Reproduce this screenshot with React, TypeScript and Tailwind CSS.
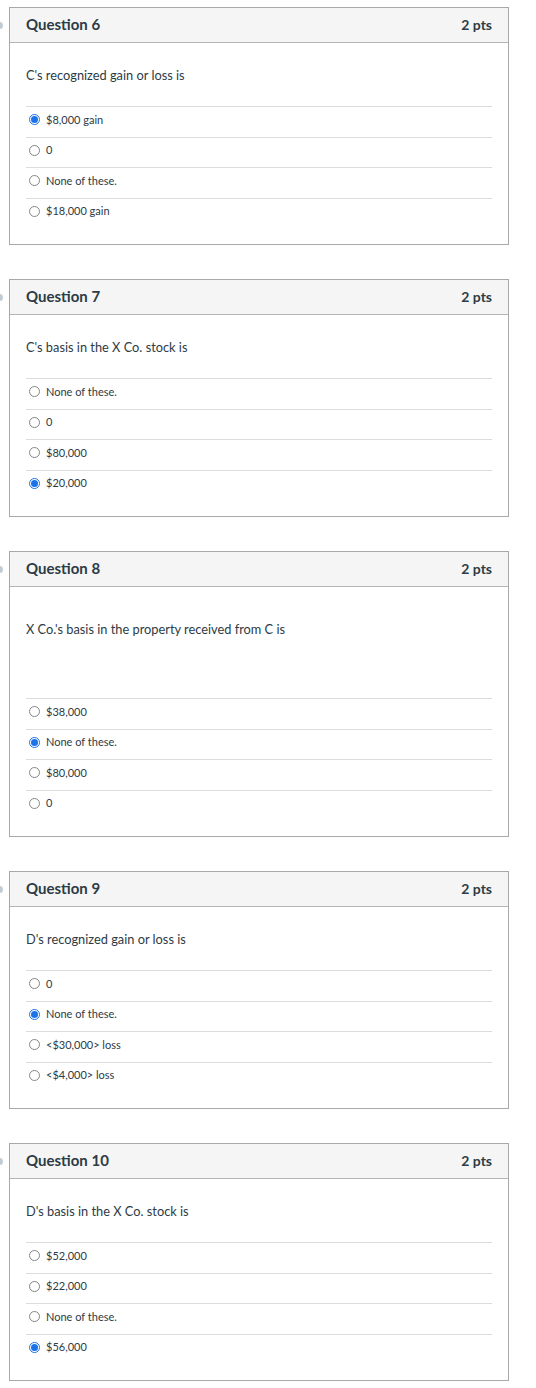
import React from "react";

interface Question {
  num: number;
  text: string;
  options: string[];
  selected: number;
  tall?: boolean;
}

const questions: Question[] = [
  {
    num: 6,
    text: "C's recognized gain or loss is",
    options: ["$8,000 gain", "0", "None of these.", "$18,000 gain"],
    selected: 0,
  },
  {
    num: 7,
    text: "C's basis in the X Co. stock is",
    options: ["None of these.", "0", "$80,000", "$20,000"],
    selected: 3,
  },
  {
    num: 8,
    text: "X Co.'s basis in the property received from C is",
    options: ["$38,000", "None of these.", "$80,000", "0"],
    selected: 1,
    tall: true,
  },
  {
    num: 9,
    text: "D's recognized gain or loss is",
    options: ["0", "None of these.", "<$30,000> loss", "<$4,000> loss"],
    selected: 1,
  },
  {
    num: 10,
    text: "D's basis in the X Co. stock is",
    options: ["$52,000", "$22,000", "None of these.", "$56,000"],
    selected: 3,
  },
];

const Radio: React.FC<{ checked: boolean }> = ({ checked }) =>
  checked ? (
    <span className="flex h-[11px] w-[11px] items-center justify-center rounded-full border border-[#1a73e8] bg-white">
      <span className="h-[7px] w-[7px] rounded-full bg-[#1a73e8]" />
    </span>
  ) : (
    <span className="h-[11px] w-[11px] rounded-full border border-[#858585] bg-white" />
  );

const QuestionCard: React.FC<{ q: Question }> = ({ q }) => {
  return (
    <div className="relative border border-[#a9a9a9] bg-white">
      <span className="absolute -left-[14px] top-[14px] h-[7px] w-[7px] rounded-full bg-[#c3ccd3]" />
      <div className="flex h-[35px] items-center justify-between border-b border-[#b4b4b4] bg-[#f5f5f5] px-4 pb-[1px]">
        <span className="text-[15px] font-bold text-[#2d3b45]">Question {q.num}</span>
        <span className="text-[14px] font-bold text-[#2d3b45]">2 pts</span>
      </div>
      <div className="px-4 pb-4">
        <p
          className={
            q.tall
              ? "pt-[33px] pb-[60px] text-[12.8px] leading-[18px] text-[#2d3b45]"
              : "pt-[23px] pb-[22px] text-[12.8px] leading-[18px] text-[#2d3b45]"
          }
        >
          {q.text}
        </p>
        <div>
          {q.options.map((opt, i) => (
            <div
              key={i}
              className="flex h-[30.5px] items-center gap-[6px] border-t border-[#dcdcdc] pl-[3px] pb-[4px]"
            >
              <Radio checked={i === q.selected} />
              <span className="text-[11px] text-[#2d3b45]">{opt}</span>
            </div>
          ))}
        </div>
      </div>
    </div>
  );
};

export default function App() {
  return (
    <div
      className="min-h-[1388px] bg-white pt-[7px] pl-[9px] pr-[27px]"
      style={{ fontFamily: "Lato, 'Liberation Sans', sans-serif" }}
    >
      <div className="flex w-[500px] flex-col gap-[34px]">
        {questions.map((q) => (
          <QuestionCard key={q.num} q={q} />
        ))}
      </div>
    </div>
  );
}
